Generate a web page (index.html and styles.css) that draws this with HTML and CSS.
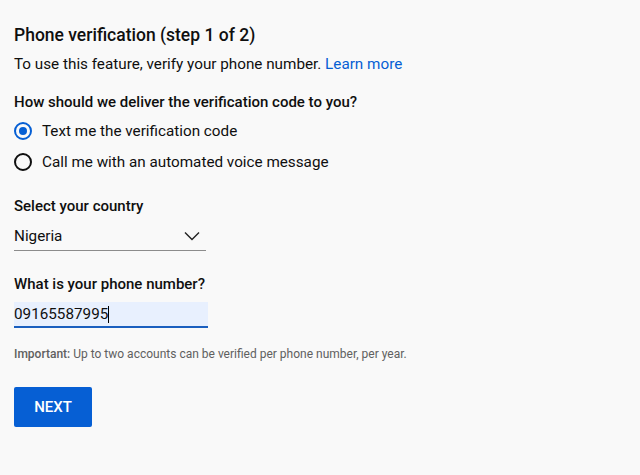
FILE: index.html
```html
<!DOCTYPE html>
<html>
<head>
<meta charset="utf-8">
<link rel="stylesheet" href="styles.css">
</head>
<body>
<div class="page">
  <h1 class="title">Phone verification (step 1 of 2)</h1>
  <p class="intro">To use this feature, verify your phone number. <a class="link" href="#">Learn more</a></p>

  <div class="question">How should we deliver the verification code to you?</div>
  <div class="radios">
    <label class="radio-row">
      <span class="radio checked"><span class="dot"></span></span>
      <span class="radio-label">Text me the verification code</span>
    </label>
    <label class="radio-row">
      <span class="radio"></span>
      <span class="radio-label">Call me with an automated voice message</span>
    </label>
  </div>

  <div class="field-label country-label">Select your country</div>
  <div class="select">
    <span class="select-value">Nigeria</span>
    <svg class="chevron" width="16" height="10" viewBox="0 0 16 10"><path d="M1 1.5 L8 8.5 L15 1.5" fill="none" stroke="#222" stroke-width="1.4"/></svg>
  </div>

  <div class="field-label phone-label">What is your phone number?</div>
  <div class="input">
    <span class="input-value">09165587995</span><span class="caret"></span>
  </div>

  <p class="note"><strong>Important:</strong> Up to two accounts can be verified per phone number, per year.</p>

  <button class="next">NEXT</button>
</div>
</body>
</html>
```

FILE: styles.css
```css
html, body {
  margin: 0;
  padding: 0;
  background: #f9f9f9;
}
body {
  font-family: Roboto, "Liberation Sans", Arial, sans-serif;
  color: #0f0f0f;
}
.page {
  padding: 24px 14px 0 14px;
  display: flex;
  flex-direction: column;
  align-items: flex-start;
}
.title {
  margin: 0;
  font-size: 17.5px;
  font-weight: 500;
  line-height: 22px;
}
.intro {
  margin: 8px 0 0 0;
  font-size: 15.25px;
  line-height: 20px;
}
.link {
  color: #065fd4;
  text-decoration: none;
}
.question {
  margin-top: 18px;
  font-size: 15px;
  font-weight: 500;
  line-height: 20px;
}
.radios {
  display: flex;
  flex-direction: column;
  gap: 11px;
  margin-top: 9px;
}
.radio-row {
  display: flex;
  align-items: center;
  gap: 10px;
  font-size: 15.25px;
  line-height: 20px;
}
.radio {
  width: 18px;
  height: 18px;
  box-sizing: border-box;
  border: 2px solid #0f0f0f;
  border-radius: 50%;
  display: flex;
  align-items: center;
  justify-content: center;
}
.radio.checked {
  border-color: #065fd4;
}
.dot {
  width: 8px;
  height: 8px;
  border-radius: 50%;
  background: #065fd4;
}
.field-label {
  font-size: 15px;
  font-weight: 500;
  line-height: 20px;
}
.country-label {
  margin-top: 24px;
}
.select {
  margin-top: 8px;
  width: 192px;
  height: 24px;
  border-bottom: 1px solid #8c8c8c;
  display: flex;
  align-items: center;
  justify-content: space-between;
  font-size: 15.25px;
  padding-bottom: 2px;
}
.chevron {
  margin-right: 6px;
}
.phone-label {
  margin-top: 23px;
}
.input {
  margin-top: 8px;
  width: 194px;
  height: 24px;
  background: #e8f0fe;
  border-bottom: 2px solid #1a5fbf;
  display: flex;
  align-items: center;
  font-size: 15.25px;
}
.caret {
  width: 1px;
  height: 17px;
  background: #000;
}
.note {
  margin: 18px 0 0 0;
  font-size: 12px;
  line-height: 16px;
  color: #606060;
}
.note strong {
  font-weight: 500;
}
.next {
  margin-top: 25px;
  width: 78px;
  height: 40px;
  border: none;
  border-radius: 2px;
  background: #065fd4;
  color: #fff;
  font-family: Roboto, "Liberation Sans", Arial, sans-serif;
  font-size: 15px;
  font-weight: 500;
  padding: 0;
}
```
